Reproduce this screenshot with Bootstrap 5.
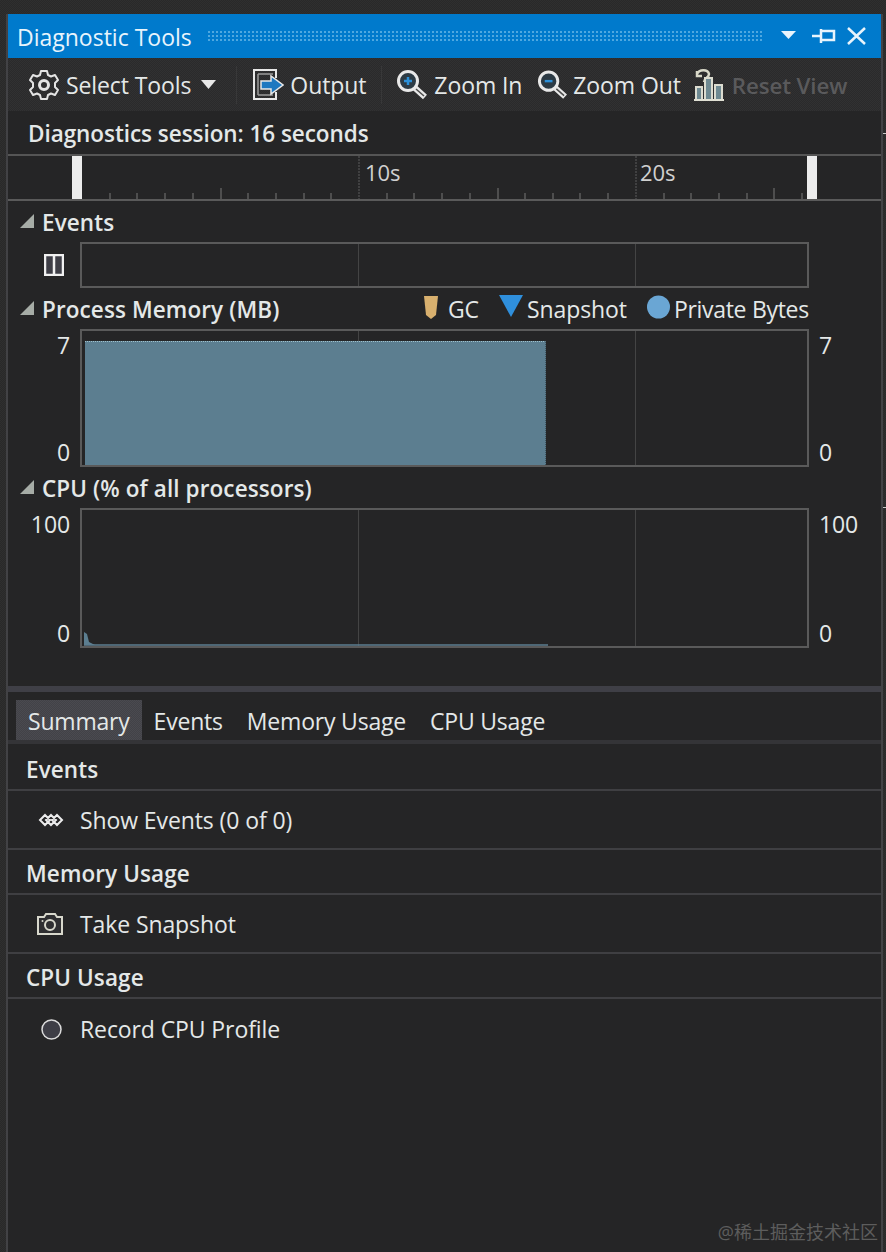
<!DOCTYPE html>
<html lang="en"><head><meta charset="utf-8"><title>Diagnostic Tools</title>
<link href="https://cdn.jsdelivr.net/npm/bootstrap@5.3.0/dist/css/bootstrap.min.css" rel="stylesheet">
<style>
html,body{background:#2b2b2b;height:1252px;overflow:hidden}
body{font-family:"Open Sans","Noto Sans CJK SC",sans-serif;font-size:23px;color:#e4e8e8;letter-spacing:-.1px;line-height:1.2}
.dt-page{position:relative;height:1252px;padding:14px 5px 0 8px;background:repeating-conic-gradient(#292929 0 25%,#2f2f2f 0 50%) 0 0/2px 2px}
.dt-win{height:1238px;background:#252526;box-shadow:-2px 0 0 #424245,2px 0 0 #424245;display:flex;flex-direction:column}
.dt-title{height:44px;background:#007acc;color:#e8f4fc;padding:0 14px 0 9px;font-size:23px;letter-spacing:0;flex:none}
.dt-title-txt{margin-top:4px}
.dt-grip{height:12px;margin:0 18px 0 15px;background-image:radial-gradient(#4fa8e0 1px,transparent 1.1px);background-size:4px 4px}
.dt-toolbar{height:53px;background:repeating-conic-gradient(#2a2a2b 0 25%,#313132 0 50%) 0 0/2px 2px;flex:none;padding-left:20px}
.dt-tool{white-space:nowrap}
.dt-tool span{padding-top:3px}
.dt-off{color:#5a5a5c;font-weight:600;font-size:22.300px}
.dt-sep{width:1px;height:38px;background:#383839}
.dt-session{height:45px;border-bottom:2px solid #555;font-weight:600;font-size:22.500px;letter-spacing:-.05px;padding:2px 0 0 20px;flex:none}
.dt-ruler{height:45px;border-bottom:2px solid #5a5a5a;position:relative;flex:none}
.dt-ruler svg{position:absolute;left:0;top:0}
.dt-tm{position:absolute;top:3px;font-size:22px;color:#d0d0d0}
.dt-head{height:41px;padding:2px 0 0 12px;font-weight:600;font-size:22.500px;letter-spacing:.1px;flex:none;position:relative}
.dt-tri{width:0;height:0;border-left:14px solid transparent;border-bottom:14px solid #a6aca6;margin-right:8px;margin-top:-3px}
.dt-chartrow{display:flex;flex:none}
.dt-axis{width:72px;flex:none;display:flex;flex-direction:column;justify-content:space-between;align-items:flex-end;padding:3px 10px 0 0}
.dt-axis2{width:64px;flex:none;display:flex;flex-direction:column;justify-content:space-between;padding:3px 0 0 10px}
.dt-box{width:729px;flex:none;border:2px solid #5a5a5a;position:relative;background-image:linear-gradient(#444,#444),linear-gradient(#444,#444);background-size:1px 100%,1px 100%;background-position:276px 0,553px 0;background-repeat:no-repeat}
.dt-fill{position:absolute;left:3px;top:10px;bottom:0;width:461px;background:#5c7e90;border-top:1px dotted #9fc0cc;border-right:1px dotted #3f5560}
.dt-legend{position:absolute;left:416px;top:0;bottom:0;width:390px;font-weight:400;font-size:23px;letter-spacing:-.1px;padding-top:3px}
.dt-legend-pb{letter-spacing:-.3px}
.dt-splitter{height:6px;background:#3f3f46;margin-top:38px;flex:none}
.dt-tabs{padding:8px 0 0 8px;height:52px;border-bottom:4px solid #343437;flex:none;letter-spacing:-.2px}
.dt-tab{height:40px;padding:0 12px;display:flex;align-items:center;padding-top:4px}
.dt-tab-on{background:repeating-conic-gradient(#424247 0 25%,#4a4a50 0 50%) 0 0/2px 2px}
.dt-sect{font-weight:600;font-size:22.500px;letter-spacing:.1px;height:47px;border-bottom:2px solid #3f3f42;padding:5px 0 0 18px;flex:none}
.dt-sect-b{height:45px;padding-top:3px}
.dt-row{height:59px;border-bottom:2px solid #3f3f42;flex:none;padding:3px 0 0 28px}
.dt-row-last{border-bottom:0}
.dt-ico{width:44px;flex:none;display:flex;margin-top:-2px}
.dt-wm{position:absolute;right:8px;bottom:8px;font-size:18px;color:#5d5d5d;letter-spacing:0}
.dt-edge{position:absolute;right:0;width:3px;height:1px;background:#c8c8c8}
</style></head>
<body>
<div class="dt-page">
<div class="dt-win">
  <div class="dt-title d-flex align-items-center">
    <span class="dt-title-txt">Diagnostic Tools</span>
    <div class="dt-grip flex-grow-1"></div>
    <svg width="86" height="24" viewBox="0 0 86 24" fill="none"><path d="M0 7h15l-7.500 8z" fill="#e8f4fc"/><path d="M31 12h9M40 5v14M40 7h13v9H40z" stroke="#e8f4fc" stroke-width="2.500"/><path d="M67 4l17 16M84 4L67 20" stroke="#e8f4fc" stroke-width="2.500"/></svg>
  </div>
  <div class="dt-toolbar d-flex align-items-center">
    <div class="dt-tool d-flex align-items-center">
      <svg width="32" height="32" viewBox="0 0 32 32" fill="none" stroke="#e4e4e4" stroke-width="2"><path d="M13 2h6l1 4 3 1.500 4-1.500 3 5-3 3v4l3 3-3 5-4-1.500-3 1.500-1 4h-6l-1-4-3-1.500-4 1.500-3-5 3-3v-4l-3-3 3-5 4 1.500 3-1.500z" stroke-linejoin="round"/><circle cx="16" cy="16" r="4.500" stroke-width="3"/></svg>
      <span style="margin-left:6px">Select Tools</span>
      <svg style="margin-left:10px" width="15" height="10" viewBox="0 0 15 10"><path d="M0 0h15l-7.500 9z" fill="#e8e8e8"/></svg>
    </div>
    <div class="dt-sep" style="margin:0 15px 0 20px"></div>
    <div class="dt-tool d-flex align-items-center">
      <svg width="32" height="33" viewBox="0 0 32 33" fill="none"><path d="M24 10V2H2v29h22v-7" stroke="#e8e8e8" stroke-width="2"/><path d="M6 6v21M6 6h15M6 27h15" stroke="#9a9a9a" stroke-width="1.500"/><path d="M9 13h10V8l12 9-12 9v-5H9z" fill="#1e78c0" stroke="#e8e8e8" stroke-width="1.500"/></svg>
      <span style="margin-left:6px">Output</span>
    </div>
    <div class="dt-sep" style="margin:0 14px 0 15px"></div>
    <div class="dt-tool d-flex align-items-center">
      <svg width="31" height="32" viewBox="0 0 31 32" fill="none"><circle cx="12" cy="12" r="9.500" stroke="#e8e8e8" stroke-width="3" fill="#2c3a44"/><path d="M19 19l10 9" stroke="#e8e8e8" stroke-width="6"/><path d="M20 20l8 7" stroke="#4a4a4a" stroke-width="1.500"/><path d="M12 8v8M8 12h8" stroke="#2b8fd8" stroke-width="2.500"/></svg>
      <span style="margin-left:7px">Zoom In</span>
    </div>
    <div class="dt-tool d-flex align-items-center" style="margin-left:15px">
      <svg width="30" height="32" viewBox="0 0 31 32" fill="none"><circle cx="12" cy="12" r="9.500" stroke="#e8e8e8" stroke-width="3" fill="#2c3a44"/><path d="M19 19l10 9" stroke="#e8e8e8" stroke-width="6"/><path d="M20 20l8 7" stroke="#4a4a4a" stroke-width="1.500"/><path d="M8 12h8" stroke="#2b8fd8" stroke-width="2.500"/></svg>
      <span style="margin-left:6px">Zoom Out</span>
    </div>
    <div class="dt-tool d-flex align-items-center" style="margin-left:13px">
      <svg width="30" height="33" viewBox="0 0 30 33" fill="none"><path d="M3 6c2-5 11-5 12 0 0 4-5 4-5 8M3 3v5h5" stroke="#d8d8c8" stroke-width="2.500"/><path d="M2 31V19h6v12M11 31V10h7v21M21 31V17h7v14" stroke="#dcdcd0" stroke-width="2" fill="#6f8a92"/><path d="M0 32h30" stroke="#e0e0d4" stroke-width="2"/></svg>
      <span class="dt-off" style="margin-left:8px">Reset View</span>
    </div>
  </div>
  <div class="dt-session d-flex align-items-center">Diagnostics session: 16 seconds</div>
  <div class="dt-ruler">
    <svg width="873" height="43" viewBox="0 0 873 43" fill="none">
      <path d="M102 43v-6M129 43v-6M157 43v-6M185 43v-6M213 43v-11M240 43v-6M268 43v-6M296 43v-6M323 43v-6M379 43v-6M406 43v-6M434 43v-6M462 43v-6M490 43v-11M517 43v-6M545 43v-6M572 43v-6M600 43v-6M656 43v-6M683 43v-6M711 43v-6M739 43v-6M766 43v-11M794 43v-6" stroke="#5c5c5c" stroke-width="1.500"/>
      <path d="M351 0v43M628 0v43" stroke="#5c5c5c" stroke-dasharray="2 1"/>
      <rect x="64" y="0" width="10" height="43" fill="#ececec"/><rect x="799" y="0" width="10" height="43" fill="#ececec"/>
    </svg>
    <span class="dt-tm" style="left:357px">10s</span><span class="dt-tm" style="left:632px">20s</span>
  </div>

  <div class="dt-head d-flex align-items-center"><i class="dt-tri"></i>Events</div>
  <div class="dt-chartrow">
    <div class="dt-axis justify-content-center" style="padding:0 16px 0 0">
      <svg width="20" height="22" viewBox="0 0 20 22"><path d="M1 1h18v20H1z" fill="#3e3e46" stroke="#f0f0f0" stroke-width="2.500"/><path d="M10 1v20" stroke="#f0f0f0" stroke-width="2.500"/></svg>
    </div>
    <div class="dt-box" style="height:46px"></div>
  </div>

  <div class="dt-head d-flex align-items-center">
    <i class="dt-tri"></i>Process Memory (MB)
    <div class="dt-legend d-flex align-items-center">
      <svg width="14" height="25" viewBox="0 0 14 25" style="margin:-6px 10px 0 0"><path d="M0 1h14l-2 19-5 4-5-4z" fill="#d8b06e"/></svg><span>GC</span>
      <svg width="24" height="24" viewBox="0 0 24 24" style="margin:-9px 4px 0 20px"><path d="M0 1h24L12 23z" fill="#2f8fdc"/></svg><span>Snapshot</span>
      <svg width="23" height="24" viewBox="0 0 23 24" style="margin:-6px 4px 0 20px"><circle cx="11.500" cy="12" r="11.500" fill="#6aa6d4"/></svg><span class="dt-legend-pb">Private Bytes</span>
    </div>
  </div>
  <div class="dt-chartrow">
    <div class="dt-axis" style="height:138px"><span>7</span><span>0</span></div>
    <div class="dt-box" style="height:138px"><div class="dt-fill"></div></div>
    <div class="dt-axis2"><span>7</span><span>0</span></div>
  </div>

  <div class="dt-head d-flex align-items-center"><i class="dt-tri"></i>CPU (% of all processors)</div>
  <div class="dt-chartrow">
    <div class="dt-axis" style="height:140px"><span>100</span><span>0</span></div>
    <div class="dt-box" style="height:140px">
      <svg width="724" height="136" viewBox="0 0 724 136" style="position:absolute;left:0;top:0" fill="none"><path d="M2 122l3 2 2 8 6 3H2z" fill="#5c7e90"/><path d="M2 135h464" stroke="#5c7e90" stroke-width="1.500"/></svg>
    </div>
    <div class="dt-axis2"><span>100</span><span>0</span></div>
  </div>

  <div class="dt-splitter"></div>
  <div class="dt-tabs d-flex">
    <div class="dt-tab dt-tab-on">Summary</div><div class="dt-tab">Events</div><div class="dt-tab">Memory Usage</div><div class="dt-tab">CPU Usage</div>
  </div>
  <div class="dt-sect d-flex align-items-center">Events</div>
  <div class="dt-row d-flex align-items-center">
    <div class="dt-ico" style="margin-left:2px;width:42px"><svg width="26" height="14" viewBox="0 0 26 14" fill="none" stroke="#ececec" stroke-width="2"><path d="M7 2l5 5-5 5-5-5zM13 2l5 5-5 5-5-5zM19 2l5 5-5 5-5-5z"/></svg></div><span>Show Events (0 of 0)</span>
  </div>
  <div class="dt-sect dt-sect-b d-flex align-items-center">Memory Usage</div>
  <div class="dt-row d-flex align-items-center">
    <div class="dt-ico"><svg width="28" height="22" viewBox="0 0 28 22" fill="none" stroke="#d8d8cc" stroke-width="2"><path d="M2 4h6l2-3h9l2 3h5v17H2z" fill="#2f2f31"/><circle cx="14" cy="12" r="5"/><circle cx="6.500" cy="8" r="1" fill="#d8d8cc" stroke="none"/></svg></div><span>Take Snapshot</span>
  </div>
  <div class="dt-sect dt-sect-b d-flex align-items-center">CPU Usage</div>
  <div class="dt-row dt-row-last d-flex align-items-center">
    <div class="dt-ico" style="padding-left:5px;width:44px"><svg width="21" height="21" viewBox="0 0 21 21"><circle cx="10.500" cy="10.500" r="9.500" fill="#3e3e46" stroke="#dcdcdc" stroke-width="1.500"/></svg></div><span>Record CPU Profile</span>
  </div>
</div>
<div class="dt-edge" style="top:133px"></div><div class="dt-edge" style="top:507px"></div>
<div class="dt-wm">@稀土掘金技术社区</div>
</div>
</body></html>
